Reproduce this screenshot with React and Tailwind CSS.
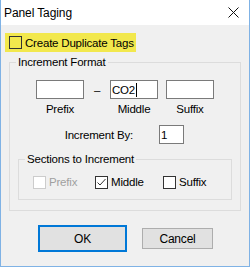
import React from "react";

function TextBox({ value, cursor, className = "w-[48px]" }) {
  return (
    <div className={`${className} h-[19px] bg-white border border-[#7a7a7a] flex items-center pl-[1px] text-black`}>
      {value}
      {cursor && <span className="inline-block w-[1px] h-[14px] bg-black ml-[1px]" />}
    </div>
  );
}

function Check({ checked, disabled, label }) {
  return (
    <div className="flex items-center">
      <div
        className={`w-[13px] h-[13px] border flex items-center justify-center ${
          disabled ? "border-[#cccccc] bg-white" : "border-[#333333] bg-white"
        }`}
      >
        {checked && (
          <svg width="11" height="11" viewBox="0 0 11 11">
            <path d="M1.5 5.5 L4 8 L9.5 2" fill="none" stroke="#333" strokeWidth="1" />
          </svg>
        )}
      </div>
      <span className={`ml-[3px] ${disabled ? "text-[#a0a0a0]" : "text-black"}`}>{label}</span>
    </div>
  );
}

export default function App() {
  return (
    <div className="w-[250px] h-[267px] bg-[#f0f0f0] border-x border-b border-[#7fb2e5] flex flex-col text-[11.5px] leading-[14px] tracking-[-0.2px] font-['Liberation_Sans',Arial,sans-serif] text-black select-none">
      {/* title bar */}
      <div className="h-[25px] bg-white flex items-center justify-between pl-[3px] pr-[10px]">
        <span className="text-[12px] tracking-[-0.1px]">Panel Taging</span>
        <svg width="11" height="11" viewBox="0 0 11 11">
          <path d="M0.5 0.5 L10.5 10.5 M10.5 0.5 L0.5 10.5" stroke="#111" strokeWidth="1" />
        </svg>
      </div>

      {/* create duplicate */}
      <div className="mt-[8px] ml-[4px] w-[131px] h-[19px] bg-[#f2e84d] flex items-center pl-[4px]">
        <div className="w-[13px] h-[13px] border border-[#333333]" />
        <span className="ml-[3px]">Create Duplicate Tags</span>
      </div>

      {/* increment format */}
      <fieldset className="mt-[3px] ml-[8px] w-[232px] border border-[#dcdcdc] pb-[10px]">
        <legend className="ml-[6px] px-[2px]">Increment Format</legend>

        <div className="flex items-center mt-[11px] ml-[26px]">
          <TextBox />
          <div className="w-[26px] text-center">–</div>
          <TextBox value="CO2" cursor />
          <div className="w-[8px]" />
          <TextBox />
        </div>

        <div className="flex mt-[3px] ml-[26px]">
          <div className="w-[48px] text-center">Prefix</div>
          <div className="w-[26px]" />
          <div className="w-[48px] text-center">Middle</div>
          <div className="w-[8px]" />
          <div className="w-[48px] text-center">Suffix</div>
        </div>

        <div className="flex items-center mt-[9px]">
          <div className="w-[123px] text-right">Increment By:</div>
          <div className="w-[26px]" />
          <TextBox value="1" className="w-[25px]" />
        </div>

        <fieldset className="mt-[8px] ml-[8px] w-[214px] border border-[#dcdcdc] pb-[10px]">
          <legend className="ml-[6px] px-[2px]">Sections to Increment</legend>
          <div className="flex mt-[9px] ml-[14px]">
            <div className="w-[62px]">
              <Check disabled label="Prefix" />
            </div>
            <div className="w-[68px]">
              <Check checked label="Middle" />
            </div>
            <Check label="Suffix" />
          </div>
        </fieldset>
      </fieldset>

      {/* buttons */}
      <div className="flex items-start mt-[14px] ml-[37px]">
        <button className="w-[89px] h-[27px] bg-[#e1e1e1] border-2 border-[#0078d7] text-[12px]">OK</button>
        <button className="ml-[15px] mt-[3px] w-[71px] h-[21px] bg-[#e1e1e1] border border-[#adadad] text-[12px]">
          Cancel
        </button>
      </div>
    </div>
  );
}
